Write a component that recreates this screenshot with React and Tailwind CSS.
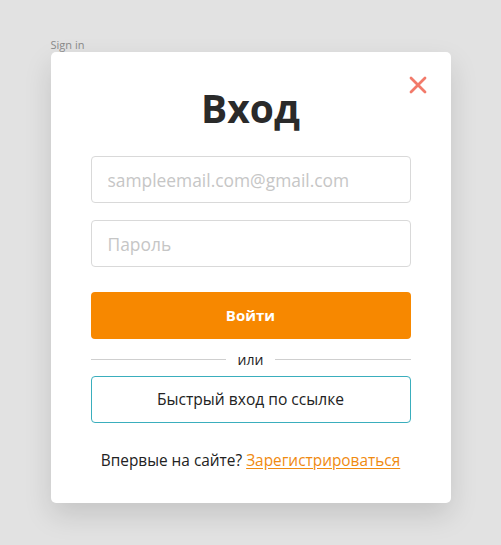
export default function App() {
  return (
    <div
      className="min-h-[545px] w-full bg-[#e2e2e2] pt-[37px]"
      style={{ fontFamily: '"Open Sans", "Noto Sans", sans-serif' }}
    >
      <div className="mx-auto w-[400px]">
        <div className="h-[15px] text-[11px] leading-[15px] text-[#8a8a8a]">Sign in</div>
        <div className="relative rounded-[5px] bg-white px-10 pb-[30px] pt-[32px] shadow-[0_12px_28px_rgba(0,0,0,0.13)]">
          <button className="absolute right-[23px] top-[23px] text-[#f27a6a]">
            <svg width="20" height="20" viewBox="0 0 20 20" fill="none" stroke="currentColor" strokeWidth="2.8" strokeLinecap="round">
              <path d="M3 3 L17 17 M17 3 L3 17" />
            </svg>
          </button>
          <h1 className="text-center text-[39px] font-bold leading-[48px] text-[#2a2a2a]">Вход</h1>
          <input
            type="text"
            placeholder="sampleemail.com@gmail.com"
            className="mt-6 block h-[47px] w-full rounded-[4px] border border-[#d9d9d9] px-4 text-[17.4px] text-[#333] placeholder:text-[#c6c6c6] focus:outline-none"
          />
          <input
            type="password"
            placeholder="Пароль"
            className="mt-[17px] block h-[47px] w-full rounded-[4px] border border-[#d9d9d9] px-4 text-[17.4px] text-[#333] placeholder:text-[#c6c6c6] focus:outline-none"
          />
          <button className="mt-[25px] block h-[47px] w-full rounded-[4px] bg-[#f78800] text-[15px] font-bold text-white">
            Войти
          </button>
          <div className="mt-[10px] flex h-5 items-center gap-3">
            <div className="h-px flex-1 bg-[#cfcfcf]" />
            <span className="text-[14px] text-[#222]">или</span>
            <div className="h-px flex-1 bg-[#cfcfcf]" />
          </div>
          <button className="mt-[7px] block h-[47px] w-full rounded-[4px] border border-[#3aaebd] text-[15.6px] text-[#222]">
            Быстрый вход по ссылке
          </button>
          <p className="mt-[26px] text-center text-[15.4px] leading-6 text-[#222]">
            Впервые на сайте?{" "}
            <a href="#" className="text-[#f08a10] underline underline-offset-2">
              Зарегистрироваться
            </a>
          </p>
        </div>
      </div>
    </div>
  );
}
